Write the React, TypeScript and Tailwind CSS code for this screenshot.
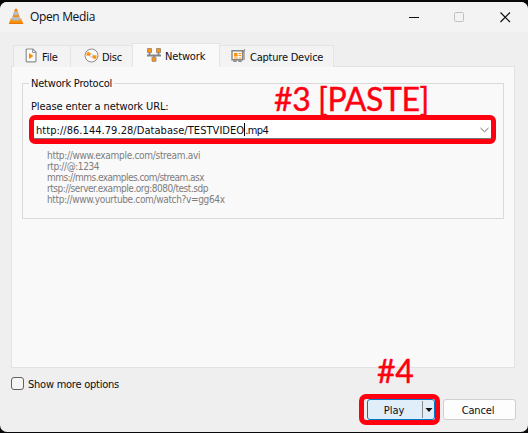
import type { ReactNode } from 'react';

const examples = [
  { text: 'http://www.example.com/stream.avi', spacing: 'tracking-[-0.3px]' },
  { text: 'rtp://@:1234', spacing: 'tracking-[-0.4px]' },
  { text: 'mms://mms.examples.com/stream.asx', spacing: 'tracking-[-0.54px]' },
  { text: 'rtsp://server.example.org:8080/test.sdp', spacing: 'tracking-[-0.45px]' },
  { text: 'http://www.yourtube.com/watch?v=gg64x', spacing: 'tracking-[-0.34px]' },
];

function Cone() {
  return (
    <svg width="16" height="17" viewBox="0 0 16 17" className="shrink-0">
      <path d="M2.8 10.500h10.400L15.200 15.700H.8z" fill="#f99312" />
      <path d="M1 14.700h14v1.200H1z" fill="#e97800" />
      <path d="M7 .8h2l3.500 11.400q-4.500 2.500-9 0z" fill="#f78b12" />
      <path d="M6.200 3.500h3.600l1 3.200q-2.800 1-5.600 0z" fill="#b8bdc0" />
      <path d="M4.600 8.500q3.400 1.200 6.800 0l1 3.200q-4.400 2-8.800 0z" fill="#b8bdc0" />
    </svg>
  );
}

function FileIcon() {
  return (
    <svg width="13" height="15" viewBox="0 0 13 15" className="shrink-0">
      <path d="M2.200 1h5.600L11 4.200v8.600q0 1-1 1H2.200q-1 0-1-1V2q0-1 1-1z" fill="#fafafa" stroke="#8e8e8e" strokeWidth="1.200" />
      <path d="M7.500 1v3.500H11" fill="none" stroke="#9b9b9b" />
      <path d="M4 5l4.500 3L4 11z" fill="#ff8c00" />
    </svg>
  );
}

function DiscIcon() {
  return (
    <svg width="15" height="15" viewBox="0 0 15 15" className="shrink-0">
      <circle cx="7.500" cy="7.500" r="6.500" fill="#fafafa" stroke="#8d8d8d" />
      <path d="M6.500 8L2.200 7.500A5.500 5.500 0 0 1 4 3.400L7.500 6z" fill="#ff9514" />
      <path d="M8.500 7L12.800 7.500A5.500 5.500 0 0 1 11 11.600L7.500 9z" fill="#ff9514" />
      <circle cx="7.500" cy="7.500" r="1.500" fill="#fff" stroke="#bbb" strokeWidth=".8" />
    </svg>
  );
}

function NetworkIcon() {
  return (
    <svg width="14" height="14" viewBox="0 0 14 14" className="shrink-0">
      <path d="M2.500 4v3.500M11.500 4v3.500M7 7v2M0 7.500h14" fill="none" stroke="#858585" strokeWidth="1.800" />
      <path d="M.5.500h4v4h-4zM9.500.500h4v4h-4zM5 9.300h4v4H5z" fill="#ff920d" stroke="#a08a70" strokeWidth=".9" />
    </svg>
  );
}

function CaptureIcon() {
  return (
    <svg width="15" height="14" viewBox="0 0 15 14" className="shrink-0">
      <path d="M1 1.800h10.500v9H1z" fill="#fafafa" stroke="#858585" strokeWidth="1.400" />
      <path d="M11.500 3L14 .5M13 1.500v9.500M3 11v1.500h2V11M8 11v1.500h2V11" fill="none" stroke="#858585" strokeWidth="1.200" />
      <path d="M3 4h3.500v3.500H3zM7.500 4H10v1H7.500zM7.500 6H10v1H7.500zM3 8.500h4v1H3zM8 8.500h2v1H8z" fill="#ff920d" />
    </svg>
  );
}

function Tab({ icon, className, children }: { icon: ReactNode; className: string; children: ReactNode }) {
  return (
    <div className={`flex items-center border-[#e4e4e4] whitespace-nowrap ${className}`}>
      <span className="-mt-[2px]">{icon}</span>
      <span className="mt-[2px]">{children}</span>
    </div>
  );
}

export default function App() {
  return (
    <div className="h-[433px] w-[528px] overflow-hidden bg-[#08080a] pt-[2px] pb-[1px] font-['DejaVu_Sans_Condensed','DejaVu_Sans',Tahoma,sans-serif] text-[11px] leading-[14px] text-[#0c0c14]">
      <div className="flex h-[430px] flex-col overflow-hidden rounded-[7px] bg-[#efefef]">
        <header className="flex h-[30px] shrink-0 items-center bg-[#f3f3f3] pl-[8px]">
          <span className="-mt-px"><Cone /></span>
          <span className="ml-[6px] font-['Open_Sans',sans-serif] text-[12px] tracking-[-0.35px]">Open Media</span>
          <svg width="104" height="14" viewBox="0 0 104 14" className="-mt-px mr-[17px] ml-auto">
            <path d="M2 7.500h10" stroke="#111" />
            <rect x="47.500" y="2.500" width="9" height="9" rx="1" fill="none" stroke="#c0c0c0" />
            <path d="M93.500 2.500l9.500 9.500m0-9.500l-9.500 9.500" stroke="#111" strokeWidth="1.200" />
          </svg>
        </header>

        <nav className="relative z-10 mt-[12px] ml-[13px] flex h-[23px] shrink-0 items-end">
          <Tab className="h-[22px] w-[58px] gap-[4px] border-x border-t bg-[#f3f3f3] pl-[11px] tracking-[-0.2px]" icon={<FileIcon />}>File</Tab>
          <Tab className="h-[22px] w-[61px] gap-[3px] border-t bg-[#f3f3f3] pl-[13px] tracking-[-0.3px]" icon={<DiscIcon />}>Disc</Tab>
          <Tab className="h-[24px] w-[88px] gap-[4px] border-x border-t bg-[#f9f9f9] pl-[14px] tracking-[-0.15px]" icon={<NetworkIcon />}>Network</Tab>
          <Tab className="h-[22px] w-[114px] gap-[4px] border-t border-r bg-[#f3f3f3] pl-[11px] tracking-[-0.22px]" icon={<CaptureIcon />}>Capture Device</Tab>
        </nav>

        <main className="-mt-px ml-[11px] h-[302px] w-[504px] shrink-0 border border-[#e2e2e2] bg-[#f9f9f9] pt-[9px] pl-[10px]">
          <fieldset className="h-[143px] w-[482px] border border-[#d9d9d9] pl-[6px]">
            <legend className="px-[2px] pt-[2px] leading-[12px] tracking-[-0.2px]">Network Protocol</legend>
            <div className="relative">
              <div className="mt-[10px] ml-[2px] h-[14px] tracking-[-0.1px]">Please enter a network URL:</div>
              <div className="absolute -top-[20px] left-[245px] font-['Lato',sans-serif] text-[32px] leading-[38px] tracking-[-0.4px] whitespace-nowrap text-[#ff0010] [-webkit-text-stroke:0.4px_#ff0010]">#3 [PASTE]</div>
            </div>
            <div className="mt-px flex h-[29px] w-[467px] items-center rounded-[6px] border-[5px] border-[#ff0010] bg-white pl-[2px] shadow-[inset_0_-1px_0_#777]">
              <span className="mt-[2px] tracking-[0.05px]">http://86.144.79.28/Database/TESTVIDEO</span>
              <span className="h-[13px] w-px bg-black" />
              <span className="mt-[2px] tracking-[-0.6px]">.mp4</span>
              <svg width="9" height="6" viewBox="0 0 9 6" className="mt-px mr-[2px] ml-auto">
                <path d="M.5 1l4 3.800L8.500 1" fill="none" stroke="#666" />
              </svg>
            </div>
            <div className="mt-[6px] ml-[18px] text-[10px] leading-[11px] text-[#7d7d7d]">
              {examples.map((e) => <div key={e.text} className="h-[11px]"><span className={e.spacing}>{e.text}</span></div>)}
            </div>
          </fieldset>
        </main>

        <footer className="relative flex h-[62px] shrink-0 pl-[11px]">
          <label className="mt-[9px] flex h-[13px] items-center gap-[4px] tracking-[-0.24px]">
            <span className="h-[13px] w-[13px] rounded-[3px] border border-[#626262] bg-[#f5f5f5]" />
            <span className="mt-[2px]">Show more options</span>
          </label>
          <div className="absolute -top-[16px] left-[377px] font-['Lato',sans-serif] text-[32px] leading-[38px] tracking-[-0.4px] text-[#ff0010] [-webkit-text-stroke:0.4px_#ff0010]">#4</div>
          <div className="mt-[26px] mr-[12px] ml-auto flex h-[31px] items-center gap-[3px]">
            <div className="h-[31px] w-[81px] rounded-[7px] border-[5px] border-[#ff0010] bg-[#efefef] pl-[3px]">
              <button className="flex h-[21px] w-[68px] items-center rounded-[3px] border border-[#0078c8] bg-[#e0eef9]">
                <span className="mt-[2px] w-[54px] pr-[2px] text-center">Play</span>
                <span className="flex h-[17px] flex-1 items-center justify-center border-l border-[#8b8b8b]">
                  <svg width="8" height="4" viewBox="0 0 8 4"><path d="M.5 0h7L4 4z" fill="#111" /></svg>
                </span>
              </button>
            </div>
            <button className="h-[21px] w-[73px] rounded-[3px] border border-[#cfcfcf] bg-[#fdfdfd] pt-[2px] pr-[3px] leading-[17px] tracking-[-0.15px]">Cancel</button>
          </div>
        </footer>
      </div>
    </div>
  );
}
